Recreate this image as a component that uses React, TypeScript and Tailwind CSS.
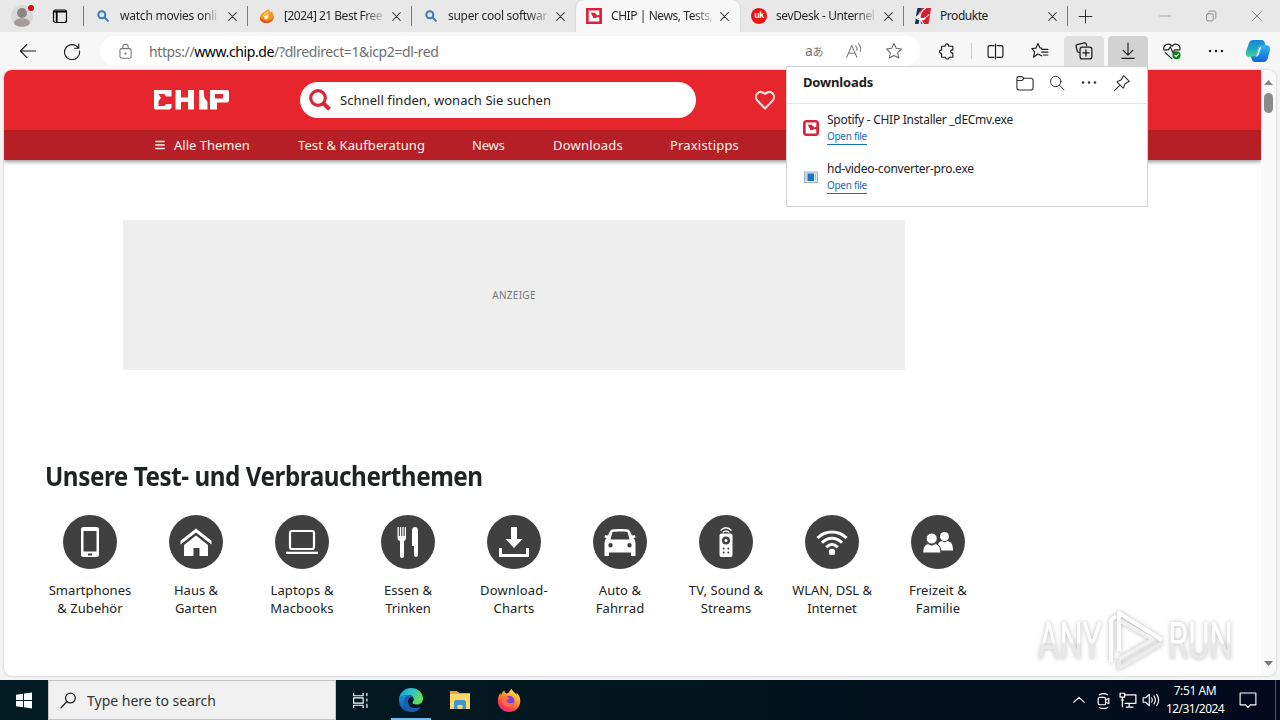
import React from "react";

type P = { children?: React.ReactNode; size?: number; box?: string; sw?: number; className?: string };

function Line({ children, size = 16, box = "0 0 16 16", sw = 1, className = "" }: P) {
  return (
    <svg width={size} height={size} viewBox={box} fill="none" stroke="currentColor" strokeWidth={sw} strokeLinecap="round" strokeLinejoin="round" className={`shrink-0 ${className}`}>
      {children}
    </svg>
  );
}

const Close = () => (
  <Line size={9} box="0 0 9 9" sw={1.1} className="text-[#444]">
    <path d="M.7.7l7.6 7.6M8.3.7L.7 8.3" />
  </Line>
);

const BlueSearch = () => (
  <Line sw={2} className="text-[#3b78bd]">
    <circle cx="6.8" cy="6.8" r="3.5" />
    <path d="M9.500 9.500l3.400 3.400" />
  </Line>
);

const Flame = () => (
  <svg width="16" height="16" viewBox="0 0 16 16" className="shrink-0">
    <path d="M9 1c-1 2-7 3.500-8 8-.6 3.500 2.500 6 6.500 6S15 12 14.700 8.500C14.500 6 13 5 13.500 3.200 12.500 3.500 11.500 4 11 4.500 11 3 10 2 9 1z" fill="#f7941d" />
    <path d="M1 9c0 4 2.800 6 6.500 6 4.500 0 7.500-3 7.200-6.500C13 13 7 15.500 1 9z" fill="#e2501c" />
    <path d="M5.300 10.200C4.500 7.500 7.500 6.800 9.500 6c.6 2.500-.7 5.200-2.400 5.200-.9 0-1.500-.4-1.800-1z" fill="#fff3c9" />
    <path d="M3.500 7C5.500 4.500 8 4.500 9.500 2.500c1 2-.5 3-2.500 4S4.300 8.500 4 10z" fill="#ffc53f" />
  </svg>
);

const ChipMark = ({ round = false }: { round?: boolean }) => (
  <svg width="16" height="16" viewBox="0 0 16 16" className="shrink-0">
    <rect width="16" height="16" rx={round ? 3.5 : 0} fill="#d8233a" />
    <path d="M2.700 2.600h10.600v4.200l-2 .6-1.600-1.400H7v4h2.700l1.600-1 2 .6v3.800H2.700z" fill="#fff" />
    <path d="M4.800 4.800h4l1.700 1.700-1.500 2.800-2.400-1z" fill="#d8233a" />
  </svg>
);

const SevMark = () => (
  <span className="flex h-4 w-4 shrink-0 items-center justify-center rounded-full bg-[#ed1111] pb-px font-['Liberation_Sans'] text-[9px] leading-none font-bold tracking-[-0.5px] text-white">uk</span>
);

const ProdMark = () => (
  <svg width="16" height="16" viewBox="0 0 16 16" className="shrink-0">
    <path d="M4 0h12l-2.500 16H6z" fill="#d71f30" />
    <path d="M2.500 0H6.500L3 7 .8 8.500zM.8 10.500h4L3.500 16H0z" fill="#1c3157" />
    <path d="M11 0C6.500 2 4.500 7 5 10.500 8 11 12 9 14 6.500M1 10c3 2.500 7 2 9.500.5M6 10c0 2.500 1 4.500 2.500 6" stroke="#fff" strokeWidth="1.200" fill="none" />
  </svg>
);

type TabProps = { icon: React.ReactNode; title: string; active?: boolean; sep?: boolean; cls: string };
function Tab({ icon, title, active, sep, cls }: TabProps) {
  return (
    <div className={`flex h-8 w-[164px] shrink-0 items-center pl-[11px] ${active ? "rounded-t-lg bg-[#f7f7f7] shadow-[0_0_2px_#bbb]" : ""}`}>
      <span className={active ? "-ml-px flex" : "flex"}>{icon}</span>
      <span className={`ml-[9px] shrink-0 whitespace-nowrap text-[12px] text-[#222] ${active ? "w-[103px]" : "w-[102px]"}`}>
        <span className={`inline-block ${cls}`}>{title}</span>
      </span>
      <span className="ml-[6px] flex"><Close /></span>
      {sep && <span className="ml-auto h-5 w-px bg-[#777]" />}
    </div>
  );
}

function TabStrip() {
  return (
    <div className="flex h-8 shrink-0 items-center bg-[#e8e8e8]">
      <div className="flex w-[84px] shrink-0 items-center">
        <svg width="34" height="32" viewBox="0 0 34 32" className="ml-[5px]">
          <circle cx="17" cy="16" r="11" fill="#d9d9d9" />
          <circle cx="17" cy="13" r="5" fill="#8b8684" />
          <ellipse cx="17" cy="22.500" rx="8" ry="4.300" fill="#a29d9a" />
          <circle cx="26" cy="8" r="3" fill="#d40b18" />
        </svg>
        <Line className="ml-[13px] text-black" sw={1.2}>
          <rect x="1.500" y="2" width="13" height="12.500" rx="2" />
          <path d="M2 3.700h12M4.700 5v9" strokeWidth="1.800" />
        </Line>
        <span className="ml-auto h-5 w-px bg-[#777]" />
      </div>
      <Tab icon={<BlueSearch />} title="watch movies onli" sep cls="tracking-[-0.22px] bg-gradient-to-r from-[#222] from-85% to-[#ccc] bg-clip-text text-transparent" />
      <Tab icon={<Flame />} title="[2024] 21 Best Free" sep cls="tracking-[-0.5px] bg-gradient-to-r from-[#222] from-80% to-[#bbb] bg-clip-text text-transparent" />
      <Tab icon={<BlueSearch />} title="super cool softwar" cls="tracking-[-0.3px] bg-gradient-to-r from-[#222] from-80% to-[#bbb] bg-clip-text text-transparent" />
      <Tab icon={<ChipMark />} title="CHIP | News, Tests," active cls="tracking-[-0.43px] bg-gradient-to-r from-[#222] from-80% to-[#ccc] bg-clip-text text-transparent" />
      <Tab icon={<SevMark />} title="sevDesk - Unternel" sep cls="tracking-[-0.4px] bg-gradient-to-r from-[#222] from-80% to-[#ccc] bg-clip-text text-transparent" />
      <Tab icon={<ProdMark />} title="Produkte" sep cls="tracking-[-0.45px]" />
      <Line size={15} className="ml-[10px] text-[#222]"><path d="M8 1.200v13.600M1.200 8h13.600" /></Line>
      <div className="ml-auto flex items-center text-[#888]">
        <Line size={12} className="mr-[34px]"><path d="M1 8h14" /></Line>
        <Line size={12} sw={1.3} className="mr-[34px]"><rect x="2" y="5" width="9" height="9.500" rx="2" /><path d="M5 2.500c0-1 1-1 2-1h5c1.500 0 2.500 1 2.500 2.500V10c0 1-.3 1.500-1 1.800" /></Line>
        <Line size={12} sw={1.3} className="mr-[17px]"><path d="M1.500 1.500l13 13M14.500 1.500l-13 13" /></Line>
      </div>
    </div>
  );
}

const STAR = "M8 1.400l2 4.200 4.700.6-3.400 3.300.8 4.700L8 12l-4.100 2.200.8-4.700L1.300 6.200 6 5.600z";

function Toolbar() {
  return (
    <div className="flex h-[38px] shrink-0 items-center bg-[#f7f7f7] text-[#1a1a1a]">
      <Line size={18} className="ml-[19px]"><path d="M1.300 8h13.400M7 2.200L1.300 8 7 13.800" /></Line>
      <Line size={18} className="ml-[26px]"><path d="M13.600 5.200A6.700 6.700 0 1 0 14.700 8M14 1.800v3.700h-3.700" /></Line>
      <div className="ml-[19px] flex h-[30px] w-[820px] items-center rounded-full bg-white">
        <Line size={17} className="ml-[17px] text-[#777]"><rect x="2.800" y="5.300" width="10.500" height="9" rx="1.500" /><path d="M5.500 5V3.500c0-3 5-3 5 0V5" /><circle cx="8" cy="10" r=".5" fill="currentColor" /></Line>
        <span className="ml-[15px] whitespace-nowrap text-[14px] tracking-[-0.38px] text-[#707070]">
          https://<span className="text-black">www.chip.de</span>/?dlredirect=1&amp;icp2=dl-red
        </span>
        <span className="ml-auto w-[18px] whitespace-nowrap text-[14px] leading-none tracking-[-0.3px] text-[#777]">a<span className="font-['Noto_Sans_CJK_JP'] text-[11px]">あ</span></span>
        <Line size={18} sw={0.9} className="ml-[22px] text-[#777]"><path d="M1.500 13.500L6 3l4.500 10.500M3 10h6M9.500 3.500q1.500 1.500 1 4M12 1.500q3 3 1.500 7" /></Line>
        <Line size={18} sw={0.9} className="ml-[22px] mr-[17px] text-[#666]"><path d={STAR} /></Line>
      </div>
      <div className="flex w-[51px] justify-center pl-[4px]">
        <Line size={18}><path d="M2.300 3.800h3.200C5 1 9 1 8.600 3.800h3.700V7c-2.400-.4-2.400 3.200 0 2.800v3.700H9c.2 2.200-3.300 2.200-3.200 0H2.300v-3.300c-2.400.2-2.400-3.400 0-3z" /></Line>
      </div>
      <span className="h-4 w-px bg-[#ccc]" />
      <Line size={17} sw={1.1} className="ml-[15px]"><path d="M6.500 2.500H2.500C1.500 2.500 1 3 1 4v8c0 1 .5 1.500 1.500 1.500h4M9.500 2.500h4c1 0 1.500.5 1.500 1.500v8c0 1-.5 1.500-1.500 1.500h-4M8 1v14" /></Line>
      <Line size={18} className="ml-[27px]"><path d="M9.500 12.300L6 10.700l-3.700 2.800.9-4.700L.8 5.800l3.700-.4L6.200 1.400l1.700 3.800 1.600.2M9.500 6.500h5.500M9.500 9h5.500M11 11.500h4" /></Line>
      <span className="ml-[15px] flex h-[30px] w-10 items-center justify-center rounded-t bg-[#e1e1e1]">
        <Line size={18} sw={1.1}><path d="M4 9.500L2.200 8.700 1 4c-.2-.8.1-1.500 1-1.700l6.500-1.500c.8-.2 1.300.3 1.500 1l.4 1.500" /><rect x="4.500" y="4.500" width="10.500" height="10.500" rx="2" /><path d="M9.700 7v5.500M7 9.700h5.500" /></Line>
      </span>
      <span className="ml-1 flex h-[30px] w-10 items-center justify-center rounded-t bg-[#d2d2d2]">
        <Line size={18}><path d="M8 1v10.500M3.700 7.500L8 11.700l4.300-4.200M2.500 14.500h11" /></Line>
      </span>
      <Line size={18} className="ml-[15px]"><path d="M.8 7C-.3 2 5.500.3 8 3.700 10.500.3 16 2 15 7M.8 7h4L6.500 4.200 9 10l1.200-3H15M2 9.500L8 15" /><circle cx="12" cy="11.800" r="3.600" fill="#0c7d17" stroke="none" /><path d="M10.500 11.800l1.200 1.200 2-2.200" stroke="#fff" /></Line>
      <Line size={18} className="ml-[26px]"><g fill="currentColor" stroke="none"><circle cx="2.700" cy="8" r="1.100" /><circle cx="8" cy="8" r="1.100" /><circle cx="13.300" cy="8" r="1.100" /></g></Line>
      <svg width="26" height="24" viewBox="0 0 26 24" className="ml-[20px]">
        <defs>
          <linearGradient id="cp1" x1="0.400" y1="0" x2="0.400" y2="1"><stop offset="0" stopColor="#1784d8" /><stop offset=".55" stopColor="#22a8c4" /><stop offset="1" stopColor="#48d785" /></linearGradient>
          <linearGradient id="cp2" x1="0" y1="0" x2="0" y2="1"><stop offset="0" stopColor="#2cb4ef" /><stop offset="1" stopColor="#1462e0" /></linearGradient>
        </defs>
        <path d="M8 1h8.500c2 0 2.700 1 3.300 3l.9 3H16c-2 0-2.600 1-3.100 3l-1.600 5.500c-.7 2-1.500 2.500-3.300 2.500H4.500C1 18 .3 15 1.200 12L4 4c.8-2 2-3 4-3z" fill="url(#cp1)" />
        <path d="M18.500 23H10c-2 0-2.700-1-3.300-3L6 17.500h2.500c2 0 2.600-1 3.100-3l1.700-5.500c.6-2 1.500-2.700 3.300-2.700h4.900c3 0 4 2.700 3.300 5.700L22.500 20c-.8 2-2 3-4 3z" fill="url(#cp2)" />
        <path d="M10 17.500c1.500-.5 2-2 2.300-3l1.700-5c.4-1.300 1-1.800 2.500-1.800l-3 8.300c-.5 1-1.500 1.500-3.500 1.500z" fill="#e7f8fb" />
      </svg>
    </div>
  );
}

const ChipLogo = () => (
  <svg width="76" height="22" viewBox="0 0 76 22" fill="#fff">
    <path d="M1 1h17.500v6.500h-5.500L11.500 5H5.500l2.500 4-2.500 3v5h6l1.500-2h5.500v3.500L17 20.500H2L1 19.500z" />
    <path d="M22.500 1h5.500v7.500h7V1h6v19.500h-6V13h-7v7.500h-5.500z" />
    <path d="M46 1h4.500l1 8 3 4v7.500H46z" />
    <path fillRule="evenodd" d="M57 1h17.500L76 2v10l-1.500 1.500H64v7h-7zM62 5v4.500h8V5z" />
  </svg>
);

const NavItem = ({ children, cls }: { children: React.ReactNode; cls: string }) => <span className={`shrink-0 whitespace-nowrap ${cls}`}>{children}</span>;

const icons: React.ReactNode[] = [
  <g key="a"><path fillRule="evenodd" d="M20.500 12h13a2.500 2.500 0 0 1 2.500 2.500v25a2.500 2.500 0 0 1-2.500 2.500h-13a2.500 2.500 0 0 1-2.500-2.500v-25a2.500 2.500 0 0 1 2.500-2.500zM20.500 16v20.500h13V16zM25 38.500v2h4v-2z" /></g>,
  <g key="b"><path d="M27 13.500l15.500 12.300v3.700L27 17.500 11.500 29.500v-3.700z" /><path d="M27 20.500l12 9.500v11h-8.500v-8h-6v8H15V30z" /></g>,
  <g key="c"><rect x="15" y="16" width="24" height="18" rx="2" fill="none" stroke="#fff" strokeWidth="2.200" /><rect x="11" y="36.700" width="32" height="2.300" /></g>,
  <g key="d"><path d="M16.500 12h1.300v9h1.100v-9h1.300v9h1.100v-9h1.300v9h1.100v-9H25v11c0 1.600-1 2.500-2 3v15a2 2 0 0 1-4 0V26c-1.500-.5-2.500-1.500-2.500-3z" /><path d="M31 15c0-4 6-4 6 0v25c0 2.500-4 2.500-4 0v-9h-2z" /></g>,
  <g key="e"><path d="M24 12h6v12h5.500L27 33l-8.500-9H24z" /><path d="M12 33h3v6h24v-6h3v9H12z" /></g>,
  <g key="f"><path fillRule="evenodd" d="M19 14.500c4-.8 12-.8 16 0 1.500.4 2 1.500 4 6l3-.5.5 2.500-2 .8c1.500 2 2 3 2 6V41h-4.500v-3.500h-22V41h-4.500V29.300c0-3 .5-4 2-6l-2-.8L12 20l3 .5c2-4.500 2.500-5.600 4-6zM19.500 17l-2 7.500h19l-2-7.500c-4-.8-11-.8-15 0zM17.500 28a2.200 2.200 0 1 0 .01 4.400A2.200 2.200 0 0 0 17.500 28zm19 0a2.200 2.200 0 1 0 .01 4.400A2.200 2.200 0 0 0 36.500 28z" /></g>,
  <g key="g"><path d="M21.500 15.500Q27 10 32.500 15.500M23.700 17.500Q27 14.500 30.300 17.500" fill="none" stroke="#fff" strokeWidth="1.300" /><rect x="20.500" y="18.500" width="13" height="23.500" rx="2" /><g fill="#404041"><circle cx="27" cy="25.500" r="4" /><circle cx="24.700" cy="33.500" r="1" /><circle cx="29.300" cy="33.500" r="1" /><circle cx="24.700" cy="37.500" r="1" /><circle cx="29.300" cy="37.500" r="1" /></g><circle cx="27" cy="25.500" r="1.500" /></g>,
  <g key="h"><path d="M12.500 23c8-8 21-8 29 0M17 27.800c6-6 14-6 20 0M21.300 32.300c3.600-3.500 7.800-3.500 11.400 0" fill="none" stroke="#fff" strokeWidth="3" /><circle cx="27" cy="37" r="3.200" /></g>,
  <g key="i"><circle cx="33.500" cy="21.500" r="4.500" /><path d="M27 35.500V30c0-2.500 2-3.500 4-4l2.500 1.200L36.500 26c3.500 1 5.500 2.500 5.500 9.500z" /><path d="M11.500 38c.3-6 1.500-8.500 5.500-9.500l3.700 1.700 3.800-1.700c4 1 5.300 3.500 5.500 9.500z" stroke="#404041" strokeWidth="1.200" /><circle cx="20.700" cy="23.500" r="5.500" stroke="#404041" strokeWidth="1" /></g>,
];

const topics: { a: string; b: string; cls: string }[] = [
  { a: "Smartphones", b: "& Zubehör", cls: "tracking-[0.05px]" },
  { a: "Haus &", b: "Garten", cls: "tracking-[0px]" },
  { a: "Laptops &", b: "Macbooks", cls: "tracking-[0.15px]" },
  { a: "Essen &", b: "Trinken", cls: "tracking-[0px]" },
  { a: "Download-", b: "Charts", cls: "tracking-[0.2px]" },
  { a: "Auto &", b: "Fahrrad", cls: "tracking-[0.1px]" },
  { a: "TV, Sound &", b: "Streams", cls: "tracking-[0.1px]" },
  { a: "WLAN, DSL &", b: "Internet", cls: "tracking-[-0.05px]" },
  { a: "Freizeit &", b: "Familie", cls: "tracking-[0.1px]" },
];

function Site() {
  return (
    <div className="flex min-h-0 flex-1 bg-[#f4f4f4] pr-1 pb-1 pl-1">
      <div className="flex flex-1 overflow-hidden rounded-[8px] bg-white shadow-[0_0_2px_#aaa]">
        <div className="flex w-[1257px] shrink-0 flex-col">
          <div className="shrink-0 shadow-[0_2px_4px_rgba(0,0,0,0.4)]">
            <div className="flex h-[60px] items-center bg-[#e6252c]">
              <span className="ml-[149px] flex w-[76px]"><ChipLogo /></span>
              <div className="ml-[71px] flex h-9 w-[396px] items-center rounded-full bg-white">
                <svg width="24" height="24" viewBox="0 0 24 24" fill="none" stroke="#d42a38" className="ml-2"><circle cx="10" cy="10" r="7.300" strokeWidth="3.200" /><path d="M15.500 15.500l6 5.800" strokeWidth="4.200" /></svg>
                <span className="ml-2 pt-[2px] text-[13px] whitespace-nowrap tracking-[0.06px] text-[#222]">Schnell finden, wonach Sie suchen</span>
              </div>
              <Line size={22} box="0 0 22 22" sw={2} className="ml-[58px] text-[#ffe3dc]"><path d="M11 19.500L3.300 11.500C-.5 7 4.500-.5 11 5c6.500-5.500 11.500 2 7.700 6.500z" /></Line>
            </div>
            <div className="flex h-[30px] items-center bg-[#b61f25] text-[13px] text-[#fff4ef]">
              <Line size={10} box="0 0 10 10" sw={1.3} className="ml-[151px] mr-[9px]"><path d="M.7 1.500h8.600M.7 5h8.600M.7 8.500h8.600" /></Line>
              <div className="w-[124px] pt-[2px]"><NavItem cls="tracking-[0px]">Alle Themen</NavItem></div>
              <div className="w-[174px] pt-[2px]"><NavItem cls="tracking-[0.1px]">Test &amp; Kaufberatung</NavItem></div>
              <div className="w-[81px] pt-[2px]"><NavItem cls="tracking-[-0.2px]">News</NavItem></div>
              <div className="w-[117px] pt-[2px]"><NavItem cls="tracking-[0.2px]">Downloads</NavItem></div>
              <div className="w-[80px] pt-[2px]"><NavItem cls="tracking-[0.18px]">Praxistipps</NavItem></div>
            </div>
          </div>
          <div className="mt-[60px] ml-[119px] flex h-[150px] w-[782px] shrink-0 items-center justify-center bg-[#eee] text-[10px] text-[#777]">
            <span className="tracking-[0.3px]">ANZEIGE</span>
          </div>
          <h1 className="mt-[88px] ml-[41px] h-9 w-max origin-left scale-x-[0.933] text-[26px] leading-9 font-bold whitespace-nowrap tracking-[-0.5px] text-[#1e2324]">Unsere Test- und Verbraucherthemen</h1>
          <div className="mt-[21px] ml-[33px] flex">
            {topics.map((t, i) => (
              <div key={t.a} className="flex w-[106px] shrink-0 flex-col items-center">
                <svg width="54" height="54" viewBox="0 0 54 54" fill="#fff"><circle cx="27" cy="27" r="27" fill="#404041" />{icons[i]}</svg>
                <div className={`mt-3 text-center text-[13px] leading-[18px] whitespace-nowrap text-[#222] ${t.cls}`}>{t.a}<br />{t.b}</div>
              </div>
            ))}
          </div>
        </div>
        <div className="flex flex-1 flex-col items-center bg-[#f9f9f9] py-[10px]">
          <svg width="9" height="5" viewBox="0 0 9 5"><path d="M4.500 0L9 5H0z" fill="#858585" /></svg>
          <span className="mt-2 h-5 w-[9px] rounded-full bg-[#8b8b8b]" />
          <svg width="9" height="5" viewBox="0 0 9 5" className="mt-auto"><path d="M4.500 5L9 0H0z" fill="#777" /></svg>
        </div>
      </div>
    </div>
  );
}

function DownloadRow({ icon, name, cls }: { icon: React.ReactNode; name: string; cls: string }) {
  return (
    <div className="flex h-[49px] items-center pb-px">
      <span className="mr-2 flex pb-px">{icon}</span>
      <div className="flex flex-col items-start">
        <span className={`h-[17px] text-[12px] leading-[15px] whitespace-nowrap text-[#222] ${cls}`}>{name}</span>
        <span className="h-[16px] border-b border-[#1a6eb5] text-[10px] leading-[15px] whitespace-nowrap tracking-[-0.3px] text-[#1a6eb5]">Open file</span>
      </div>
    </div>
  );
}

function DownloadsPopup() {
  return (
    <div className="absolute top-[66px] left-[786px] h-[141px] w-[362px] border border-[#d3d3d3] bg-white">
      <div className="flex h-[37px] items-center border-b border-[#e4e4e4] pb-[4px] pl-4 text-[#333]">
        <span className="w-[213px] text-[13px] font-bold tracking-[-0.15px] text-[#1c1c1c]">Downloads</span>
        <Line size={18}><path d="M.8 4c0-1.200.5-1.700 1.700-1.700h2.800l1.700 1.500h6.200c1.300 0 2 .7 2 2v6.400c0 1.300-.7 2-2 2H2.800c-1.300 0-2-.7-2-2zM.8 5.800h4.500L7 3.800" /></Line>
        <Line size={16} className="ml-[15px]"><circle cx="6.700" cy="6.500" r="5.200" /><path d="M10.500 10.300l4.500 4.500" /></Line>
        <Line size={18} className="ml-[15px]"><g fill="currentColor" stroke="none"><circle cx="2.700" cy="7.500" r="1.100" /><circle cx="8" cy="7.500" r="1.100" /><circle cx="13.300" cy="7.500" r="1.100" /></g></Line>
        <Line size={18} className="ml-[15px]"><path d="M9.500 1.500l5 5c-1 .8-2.800 1.200-3.900 2.500-.7 1-.7 2.500-1.600 3.500L3.500 7c1-.9 2.500-.9 3.500-1.600 1.300-1.100 1.700-2.900 2.500-3.900zM6.200 9.800L1.200 14.800" /></Line>
      </div>
      <div className="pl-4">
        <DownloadRow icon={<ChipMark round />} name="Spotify - CHIP Installer _dECmv.exe" cls="tracking-[-0.28px]" />
        <DownloadRow
          icon={<svg width="16" height="16" viewBox="0 0 16 16"><rect x="1.500" y="3" width="13" height="10.500" fill="#dfe6ea" stroke="#a8b4bc" /><rect x="4.500" y="4.500" width="6.500" height="7.500" fill="#1676c8" /><path d="M12.500 5.500v6M3 5.500v6" stroke="#8794a0" strokeDasharray="1 1" /></svg>}
          name="hd-video-converter-pro.exe"
          cls="tracking-[-0.25px]"
        />
      </div>
    </div>
  );
}

function Watermark() {
  return (
    <svg width="200" height="66" viewBox="0 0 200 66" className="absolute top-[608px] left-[1035px] [filter:drop-shadow(0_0_2px_rgba(0,0,0,0.28))]" fill="#fff">
      <defs><linearGradient id="wm" x1="0" y1="0" x2="0" y2="1"><stop offset=".5" stopColor="#fff" /><stop offset=".55" stopColor="#e9e9e9" /><stop offset="1" stopColor="#e6e6e6" /></linearGradient></defs>
      <g fill="url(#wm)" fontFamily="Roboto, sans-serif" fontSize="52">
        <text x="3" y="51" textLength="64" lengthAdjust="spacingAndGlyphs">ANY</text>
        <text x="133" y="51" textLength="65" lengthAdjust="spacingAndGlyphs">RUN</text>
      </g>
      <g fill="none" stroke="#fff" strokeWidth="4" strokeLinejoin="round">
        <path d="M76 54V12l5-4" />
        <path d="M84 43V5l43 27" />
        <path d="M84 12l34 19.500L84 51" stroke="#f0f0f0" />
        <path d="M84 52v8l43-25" stroke="#ececec" />
      </g>
    </svg>
  );
}

const EdgeLogo = () => (
  <svg width="26" height="26" viewBox="0 0 26 26">
    <defs>
      <linearGradient id="e1" x1="0" y1="0" x2="1" y2="0.400"><stop offset="0" stopColor="#1b9de2" /><stop offset=".55" stopColor="#2fc3c0" /><stop offset="1" stopColor="#66dd55" /></linearGradient>
      <linearGradient id="e2" x1="0" y1="0" x2="0" y2="1"><stop offset="0" stopColor="#1a8fe0" /><stop offset="1" stopColor="#1250a8" /></linearGradient>
    </defs>
    <path d="M1 12C2 5 7 1 13 1c7 0 12 4.700 12 10.500 0 4-3 6-6.500 6-3 0-4-1-4-2 0-.8 1.200-1.300 1.200-3.200C15.700 9.500 13 8 10 8c-4 0-7 1.500-9 4z" fill="url(#e1)" />
    <path d="M1 12c2-2.700 5-4 8.500-4 2 0 3.700.7 4.700 1.700C11 10 9.500 13 10 16c.6 4 5 6.500 12.500 4.200C20 23.500 17 25 13 25 5.500 25 .5 19.500 1 12z" fill="url(#e2)" />
    <path d="M9.500 8.200C4 11 5 22 13 25c4 0 7.500-2 9.500-4.800C15 22.500 10.600 20 10 16c-.5-3 1-6 4.200-6.300-1-1-2.700-1.700-4.700-1.500z" fill="#155fb3" />
  </svg>
);

const FolderLogo = () => (
  <svg width="22" height="20" viewBox="0 0 22 20">
    <path d="M1 1h7l2 2h11V8H1z" fill="#e8a33a" />
    <path d="M1 4h20v15H1z" fill="#fbd66b" />
    <path d="M5 19v-7.500L6.500 10h9l1.500 1.500V19h-3.500v-4h-5v4z" fill="#3f95cf" />
  </svg>
);

const FirefoxLogo = () => (
  <svg width="24" height="25" viewBox="0 0 24 25">
    <defs><linearGradient id="ff" x1="0.800" y1="0" x2="0.200" y2="1"><stop offset="0" stopColor="#fff04a" /><stop offset=".4" stopColor="#ff9a2e" /><stop offset=".75" stopColor="#ff3b4f" /><stop offset="1" stopColor="#e3208c" /></linearGradient></defs>
    <path d="M14.500.8c1 2.700 3.500 3.700 5.300 6.200 0-1-.3-1.700-.5-2.500 3 2.500 4 5.500 4 8.500 0 6.200-5 11-11.300 11S.8 19 .8 13C.8 9.500 2 7 3.300 5c.2 1 .5 1.500 1 2C5 4.500 6 3.300 7.500 2.500 7.300 4 8 5 9.500 5.500c2 .2 3-2.500 5-4.700z" fill="url(#ff)" />
    <circle cx="12.300" cy="13" r="5.300" fill="#7542e5" />
    <path d="M5 9c3-2 5 .5 7.500.8.300 1.400-2.300 1.800-3 3.200 1 2.500 4.500 3 7.500 1-1 4-4.500 5.500-8 4.300S4.500 13 5 9z" fill="#ff7139" />
  </svg>
);

function Taskbar() {
  return (
    <div className="flex h-10 shrink-0 items-center bg-gradient-to-r from-[#021b23] via-[#03161f] to-[#020a1b] text-white">
      <span className="flex w-12 justify-center">
        <svg width="16" height="17" viewBox="0 0 17 17" fill="#fff"><path d="M0 2.500l7.500-1.200V8H0zM8.500 1.100L17 0v8H8.500zM0 9h7.500v6.700L0 14.500zM8.500 9H17v8l-8.500-1.200z" /></svg>
      </span>
      <div className="flex h-10 w-72 items-center border border-[#c4c4c4] bg-[#f1f1f1] text-[#222]">
        <Line size={17} sw={1.2} className="ml-[11px]"><circle cx="9.800" cy="5.700" r="4.600" /><path d="M6.400 9.200L1 14.800" /></Line>
        <span className="ml-[10px] text-[14px] whitespace-nowrap tracking-[0px] text-[#333]">Type here to search</span>
      </div>
      <span className="flex w-[48px] justify-center">
        <Line size={17} sw={1.1}><path d="M1.500 1v2.500h9V1M1.500 15v-2.500h9V15M1.500 5.500h9v5h-9zM14 1v3M14 6v3M14 11v4" strokeLinecap="butt" /></Line>
      </span>
      <span className="ml-[2px] flex h-10 w-[50px] flex-col items-center"><span className="flex flex-1 items-center pt-[1px]"><EdgeLogo /></span><span className="h-[2px] w-10 bg-[#76b9ed]" /></span>
      <span className="flex w-12 justify-center"><FolderLogo /></span>
      <span className="flex w-[50px] justify-center"><FirefoxLogo /></span>
      <div className="ml-auto flex items-center">
        <Line size={12} sw={1.5}><path d="M1 11l7-6.500 7 6.500" /></Line>
        <Line size={17} sw={1.1} className="ml-[10px]"><rect x="3" y="5" width="7" height="7" rx="1.500" /><path d="M10 7.500l3-1.500v5l-3-1.500M4 2.500q4-2 8 0M4 14.500q4 2 8 0" /></Line>
        <Line size={18} sw={1.1} className="ml-[7px]"><path d="M5 3.500h10v7.500H5.500M9 11v3M6.500 14.300h6M1 2h4v3.500H1zM3 5.500V14M2 8h2" /></Line>
        <Line size={18} className="ml-[5px]"><path d="M1 6h2.200L6.500 3v10L3.200 10H1zM8.500 6q1.300 2 0 4M10.700 4.500q2.400 3.500 0 7M13 3q3.600 5 0 10" /></Line>
        <div className="ml-[5px] w-[60px] text-center text-[12px] leading-[18px] whitespace-nowrap">
          <div className="tracking-[-0.4px]">7:51 AM</div>
          <div className="tracking-[-0.6px]">12/31/2024</div>
        </div>
        <Line size={18} className="mr-[18px] ml-[14px]"><path d="M1 1.800h14v10.500h-5L8 14.500l-2-2.200H1z" /></Line>
        <span className="mr-[4px] h-10 w-px bg-[#4d5664]" />
      </div>
    </div>
  );
}

export default function App() {
  return (
    <div className="relative flex h-[720px] w-[1280px] flex-col overflow-hidden bg-[#f4f4f4] font-['Noto_Sans','Open_Sans',sans-serif]">
      <TabStrip />
      <Toolbar />
      <Site />
      <Taskbar />
      <DownloadsPopup />
      <Watermark />
    </div>
  );
}
